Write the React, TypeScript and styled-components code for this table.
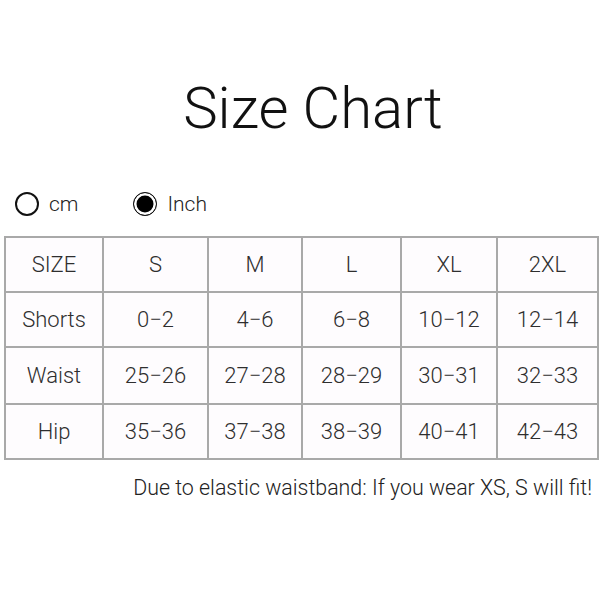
import React from "react";
import styled, { createGlobalStyle } from "styled-components";

const GlobalStyle = createGlobalStyle`
  html, body { margin: 0; padding: 0; background: #ffffff; }
  body { font-family: Roboto, "Liberation Sans", Arial, sans-serif; font-weight: 300; }
`;

const Page = styled.div`
  width: 600px;
  height: 600px;
  box-sizing: border-box;
  padding: 76px 2px 0 4px;
  display: flex;
  flex-direction: column;
`;

const Title = styled.h1`
  margin: 0;
  text-align: center;
  font-weight: 300;
  font-size: 58px;
  line-height: 64px;
  color: #111;
  padding-left: 24px;
`;

const UnitRow = styled.div`
  display: flex;
  align-items: center;
  gap: 55px;
  margin-top: 52px;
  padding-left: 11px;
  height: 24px;
`;

const Unit = styled.label`
  display: flex;
  align-items: center;
  gap: 10px;
  font-size: 21px;
  color: #222;
`;

const Dot = styled.span<{ $on?: boolean }>`
  width: 24px;
  height: 24px;
  box-sizing: border-box;
  border-radius: 50%;
  border: ${(p) => (p.$on ? "1.5px" : "2px")} solid #111;
  background: ${(p) => (p.$on ? "#000" : "#fff")};
  box-shadow: ${(p) => (p.$on ? "inset 0 0 0 2.5px #fff" : "none")};
`;

const Table = styled.table`
  margin-top: 20px;
  width: 594px;
  border-collapse: collapse;
  table-layout: fixed;
  background: #fefcfe;
`;

const Cell = styled.td<{ $h: number }>`
  border: 2px solid #a9a9a9;
  height: ${(p) => p.$h}px;
  padding: 0;
  text-align: center;
  vertical-align: middle;
  font-size: 22px;
  color: #2e2e2e;
`;

const Note = styled.p`
  margin: 15px 0 0;
  text-align: right;
  padding-right: 6px;
  font-size: 21.4px;
  color: #222;
`;

const widths = [98, 105, 94, 99, 96, 101];
const heights = [53, 53, 55, 53];

const rows = [
  ["SIZE", "S", "M", "L", "XL", "2XL"],
  ["Shorts", "0−2", "4−6", "6−8", "10−12", "12−14"],
  ["Waist", "25−26", "27−28", "28−29", "30−31", "32−33"],
  ["Hip", "35−36", "37−38", "38−39", "40−41", "42−43"],
];

export default function App() {
  return (
    <>
      <GlobalStyle />
      <Page>
        <Title>Size Chart</Title>
        <UnitRow>
          <Unit>
            <Dot />
            cm
          </Unit>
          <Unit>
            <Dot $on />
            Inch
          </Unit>
        </UnitRow>
        <Table>
          <colgroup>
            {widths.map((w, i) => (
              <col key={i} style={{ width: w }} />
            ))}
          </colgroup>
          <tbody>
            {rows.map((r, ri) => (
              <tr key={ri}>
                {r.map((c, ci) => (
                  <Cell key={ci} $h={heights[ri]}>
                    {c}
                  </Cell>
                ))}
              </tr>
            ))}
          </tbody>
        </Table>
        <Note>Due to elastic waistband: If you wear XS, S will fit!</Note>
      </Page>
    </>
  );
}
